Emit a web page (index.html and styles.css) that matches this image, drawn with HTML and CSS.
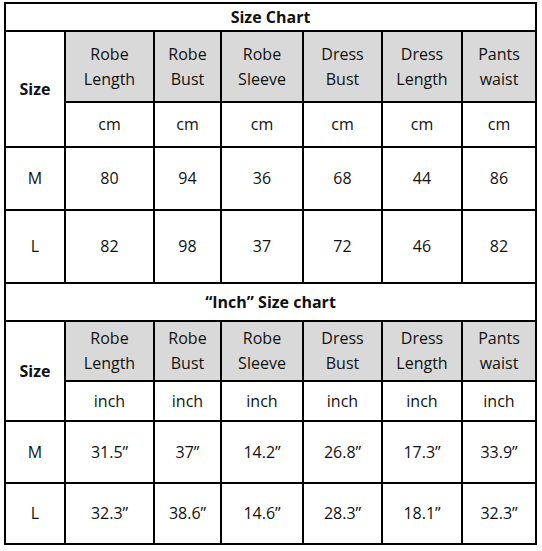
FILE: index.html
```html
<!DOCTYPE html>
<html>
<head>
<meta charset="utf-8">
<link rel="stylesheet" href="styles.css">
</head>
<body>
<div class="chart">
  <div class="title t1">Size Chart</div>
  <div class="size s1">Size</div>
  <div class="hd">Robe<br>Length</div>
  <div class="hd">Robe<br>Bust</div>
  <div class="hd">Robe<br>Sleeve</div>
  <div class="hd">Dress<br>Bust</div>
  <div class="hd">Dress<br>Length</div>
  <div class="hd">Pants<br>waist</div>
  <div class="c">cm</div><div class="c">cm</div><div class="c">cm</div><div class="c">cm</div><div class="c">cm</div><div class="c">cm</div>
  <div class="c">M</div><div class="c">80</div><div class="c">94</div><div class="c">36</div><div class="c">68</div><div class="c">44</div><div class="c">86</div>
  <div class="c">L</div><div class="c">82</div><div class="c">98</div><div class="c">37</div><div class="c">72</div><div class="c">46</div><div class="c">82</div>
  <div class="title t2">“Inch” Size chart</div>
  <div class="size s2">Size</div>
  <div class="hd">Robe<br>Length</div>
  <div class="hd">Robe<br>Bust</div>
  <div class="hd">Robe<br>Sleeve</div>
  <div class="hd">Dress<br>Bust</div>
  <div class="hd">Dress<br>Length</div>
  <div class="hd">Pants<br>waist</div>
  <div class="c">inch</div><div class="c">inch</div><div class="c">inch</div><div class="c">inch</div><div class="c">inch</div><div class="c">inch</div>
  <div class="c">M</div><div class="c">31.5”</div><div class="c">37”</div><div class="c">14.2”</div><div class="c">26.8”</div><div class="c">17.3”</div><div class="c">33.9”</div>
  <div class="c">L</div><div class="c">32.3”</div><div class="c">38.6”</div><div class="c">14.6”</div><div class="c">28.3”</div><div class="c">18.1”</div><div class="c">32.3”</div>
</div>
</body>
</html>
```
FILE: styles.css
```css
html, body {
  margin: 0;
  padding: 0;
  background: #fff;
}
body {
  padding: 2px 0 0 4px;
  font-family: "Open Sans", "Liberation Sans", sans-serif;
  font-size: 16px;
  color: #111;
}
.chart {
  display: grid;
  width: 533px;
  box-sizing: border-box;
  background: #000;
  padding: 2px;
  gap: 2px;
  grid-template-columns: 58px 87px 65px 80px 77px 78px 72px;
  grid-template-rows: 26px 69px 43px 61px 71px 36px 58px 38px 60px 59px;
}
.chart > div {
  background: #fff;
  display: flex;
  align-items: center;
  justify-content: center;
  text-align: center;
  line-height: 25px;
}
.title {
  grid-column: 1 / -1;
  font-weight: bold;
}
.size {
  grid-row: span 2;
  font-weight: bold;
}
.chart > .hd {
  background: #d9d9d9;
}
```
